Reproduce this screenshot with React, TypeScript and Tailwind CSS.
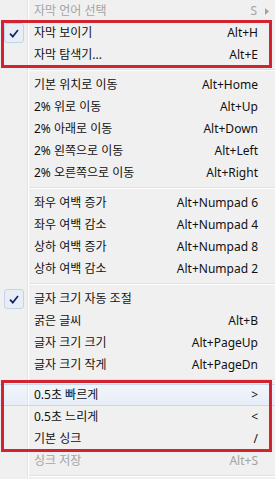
type Item =
    | { sep: true }
    | { sep?: false; label: string; shortcut?: string; disabled?: boolean; checked?: boolean; submenu?: boolean; hot?: boolean };

const items: Item[] = [
    { label: '자막 언어 선택', shortcut: 'S', disabled: true, submenu: true },
    { label: '자막 보이기', shortcut: 'Alt+H', checked: true },
    { label: '자막 탐색기...', shortcut: 'Alt+E' },
    { sep: true },
    { label: '기본 위치로 이동', shortcut: 'Alt+Home' },
    { label: '2% 위로 이동', shortcut: 'Alt+Up' },
    { label: '2% 아래로 이동', shortcut: 'Alt+Down' },
    { label: '2% 왼쪽으로 이동', shortcut: 'Alt+Left' },
    { label: '2% 오른쪽으로 이동', shortcut: 'Alt+Right' },
    { sep: true },
    { label: '좌우 여백 증가', shortcut: 'Alt+Numpad 6' },
    { label: '좌우 여백 감소', shortcut: 'Alt+Numpad 4' },
    { label: '상하 여백 증가', shortcut: 'Alt+Numpad 8' },
    { label: '상하 여백 감소', shortcut: 'Alt+Numpad 2' },
    { sep: true },
    { label: '글자 크기 자동 조절', checked: true },
    { label: '굵은 글씨', shortcut: 'Alt+B' },
    { label: '글자 크기 크기', shortcut: 'Alt+PageUp' },
    { label: '글자 크기 작게', shortcut: 'Alt+PageDn' },
    { sep: true },
    { label: '0.5초 빠르게', shortcut: '>', hot: true },
    { label: '0.5초 느리게', shortcut: '<' },
    { label: '기본 싱크', shortcut: '/' },
    { label: '싱크 저장', shortcut: 'Alt+S', disabled: true },
    { sep: true },
];

function Gutter({ checked }: { checked?: boolean }) {
    return (
        <div className="flex h-full shrink-0">
            <div className="w-[28px] h-full flex items-center justify-center border-r border-[#e2e3e3]">
                {checked && (
                    <div className="w-[20px] h-[20px] rounded-[3px] border border-[#c3d3e8] bg-[#e9eef6] flex items-center justify-center">
                        <svg width="10" height="9" viewBox="0 0 10 9">
                            <path d="M1 4.6 L3.8 7.6 L9 1" fill="none" stroke="#10286b" strokeWidth="1.7" />
                        </svg>
                    </div>
                )}
            </div>
            <div className="w-px h-full bg-white" />
        </div>
    );
}

export default function App() {
    return (
        <div className="relative w-[275px] h-[479px] overflow-hidden bg-[#f0f0f0] font-['Noto_Sans','Noto_Sans_CJK_KR',sans-serif] text-[12px] leading-none">
            <div className="flex flex-col">
                {items.map((it, i) =>
                    it.sep ? (
                        <div key={i} className="flex h-[8px]">
                            <Gutter />
                            <div className="flex-1 flex flex-col pt-[3px] pl-[1px]">
                                <div className="h-px bg-[#e0e0e0]" />
                                <div className="h-px bg-white" />
                            </div>
                        </div>
                    ) : (
                        <div
                            key={i}
                            className={`flex items-center h-[22px] ${
                                it.hot ? 'bg-gradient-to-b from-[#f1f5fb] to-[#e7eef8] border-y border-[#c8d9ef]' : ''
                            } ${it.disabled ? 'text-[#a3a3a3]' : 'text-[#111]'}`}
                        >
                            <Gutter checked={it.checked} />
                            <span className="ml-[5px] flex-1 whitespace-nowrap">{it.label}</span>
                            {it.shortcut && <span className="whitespace-nowrap">{it.shortcut}</span>}
                            {it.submenu ? (
                                <svg className="ml-[8px] mr-[6px]" width="4" height="7" viewBox="0 0 4 7">
                                    <path d="M0 0 L4 3.5 L0 7 Z" fill="#a3a3a3" />
                                </svg>
                            ) : (
                                <span className="w-[17px] shrink-0" />
                            )}
                        </div>
                    )
                )}
            </div>

            {/* red annotation boxes */}
            <div className="absolute left-[1px] top-[20px] w-[271px] h-[48px] border-[3px] border-[#d3232e]" />
            <div className="absolute left-[1px] top-[380px] w-[271px] h-[72px] border-[3px] border-[#d3232e]" />
        </div>
    );
}
